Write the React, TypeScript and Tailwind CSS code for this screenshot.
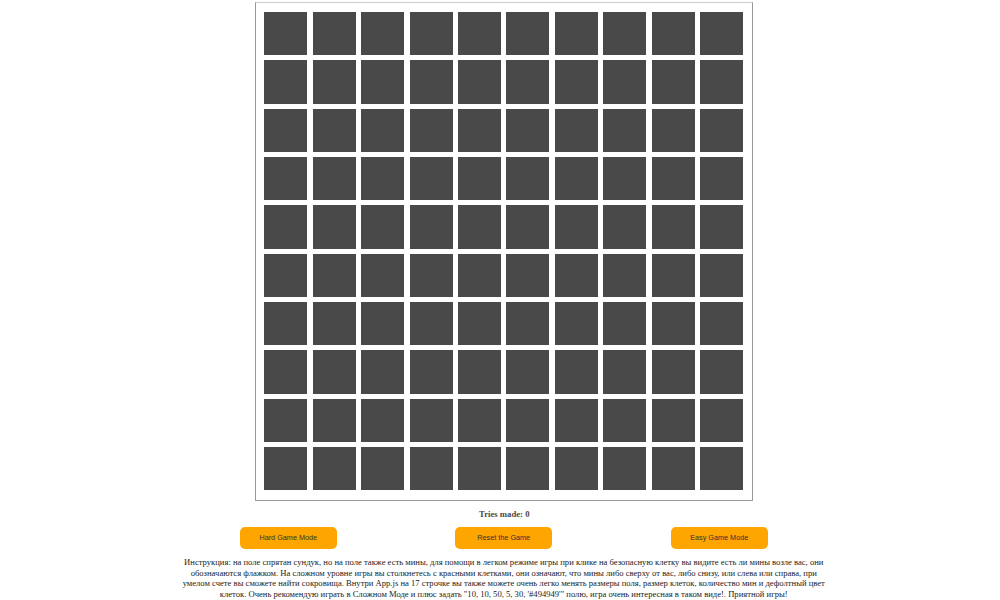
const cells = Array.from({ length: 100 }, (_, i) => i);

const lines = [
  "Инструкция: на поле спрятан сундук, но на поле также есть мины, для помощи в легком режиме игры при клике на безопасную клетку вы видите есть ли мины возле вас, они",
  "обозначаются флажком. На сложном уровне игры вы столкнетесь с красными клетками, они означают, что мины либо сверху от вас, либо снизу, или слева или справа, при",
  "умелом счете вы сможете найти сокровища. Внутри App.js на 17 строчке вы также можете очень легко менять размеры поля, размер клеток, количество мин и дефолтный цвет",
  "клеток. Очень рекомендую играть в Сложном Моде и плюс задать \"10, 10, 50, 5, 30, '#494949'\" полю, игра очень интересная в таком виде!. Приятной игры!",
];

function GameButton({ label }: { label: string }) {
  return (
    <button className="w-[97px] h-[22px] rounded-[5px] bg-[#ffa500] text-[7.25px] text-[#333333] font-['Liberation_Sans',sans-serif] flex items-center justify-center">
      {label}
    </button>
  );
}

export default function App() {
  return (
    <div className="w-[1000px] h-[600px] overflow-hidden bg-white flex flex-col items-center pt-[2px] pl-[8.5px] font-['Liberation_Serif',serif]">
      <div className="w-[498px] h-[499px] border border-[#999999] border-t-[#cccccc] pt-[9px] pl-[8px]">
        <div className="grid grid-cols-[repeat(10,43px)] grid-rows-[repeat(10,43.35px)] gap-x-[5.44px] gap-y-[5px]">
          {cells.map((c) => (
            <div key={c} className="bg-[#494949]" />
          ))}
        </div>
      </div>
      <div className="mt-[8px] h-[11px] text-[8.7px] leading-[11px] font-bold text-[#494949]">
        Tries made: 0
      </div>
      <div className="mt-[7px] mr-[1px] w-[528px] flex justify-between">
        <GameButton label="Hard Game Mode" />
        <GameButton label="Reset the Game" />
        <GameButton label="Easy Game Mode" />
      </div>
      <div className="mt-[8px] mr-[1px] w-[660px] text-center text-[8.6px] leading-[10.5px] text-[#222222]">
        {lines.map((l) => (
          <div key={l} className="whitespace-nowrap">{l}</div>
        ))}
      </div>
    </div>
  );
}
